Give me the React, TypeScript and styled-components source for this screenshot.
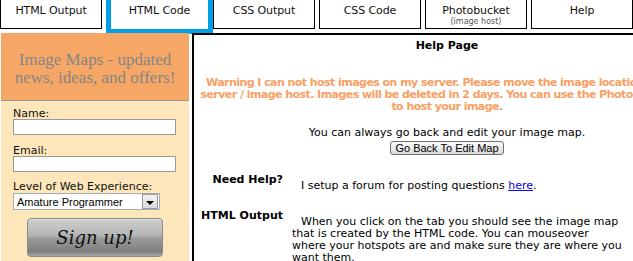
import React from 'react';
import styled, { createGlobalStyle } from 'styled-components';

const Global = createGlobalStyle`
  html, body { margin: 0; padding: 0; overflow: hidden; background: #fff; }
  body { font-family: "DejaVu Sans", Verdana, sans-serif; font-size: 11px; color: #000; }
`;

const Page = styled.div`
  width: 760px;
`;

const TabBar = styled.div`
  display: flex;
  align-items: flex-start;
  gap: 4px;
  height: 33px;
`;

const Tab = styled.div<{ $active?: boolean }>`
  box-sizing: border-box;
  flex: none;
  width: ${p => (p.$active ? 107 : 102)}px;
  height: ${p => (p.$active ? 34 : 29)}px;
  margin-right: ${p => (p.$active ? -4 : 0)}px;
  border: ${p => (p.$active ? '5px solid #00a0e3' : '1px solid #000')};
  border-top: none;
  padding-top: 4px;
  text-align: center;
  line-height: 13px;
  letter-spacing: -0.1px;
  color: #111;
  background: #fff;
  cursor: pointer;
`;

const TabNote = styled.div`
  font-size: 8px;
  line-height: 10px;
  letter-spacing: 0;
  color: #555;
`;

const Main = styled.div`
  display: flex;
  align-items: flex-start;
  gap: 3px;
  padding-left: 1px;
`;

const Side = styled.div`
  flex: none;
  width: 188px;
  background: #fde6ba;
  min-height: 240px;
`;

const Promo = styled.div`
  height: 68px;
  box-sizing: border-box;
  padding-top: 18px;
  background: #f6a766;
  border-bottom: 1px solid #999;
  font-family: "Liberation Serif", "Times New Roman", serif;
  font-size: 17px;
  line-height: 18px;
  color: #858585;
  text-align: center;
`;

const Form = styled.div`
  padding: 7px 0 0 12px;
  display: flex;
  flex-direction: column;
  align-items: flex-start;
`;

const Label = styled.div<{ $gap?: number }>`
  line-height: 11px;
  margin-top: ${p => p.$gap ?? 0}px;
  color: #111;
`;

const Field = styled.input`
  box-sizing: border-box;
  width: 163px;
  height: 16px;
  margin: 0;
  padding: 0 2px;
  border: 1px solid #999;
  background: #fff;
  outline: none;
`;

const SelectBox = styled.div`
  box-sizing: border-box;
  display: flex;
  align-items: center;
  width: 147px;
  height: 17px;
  margin-top: 1px;
  border: 1px solid #a5acb2;
  background: #fff;
  font-family: "Liberation Sans", Arial, sans-serif;
  font-size: 11px;
  padding-left: 3px;
`;

const SelectText = styled.span`
  flex: 1;
`;

const SelectArrow = styled.span`
  box-sizing: border-box;
  width: 16px;
  height: 15px;
  margin-right: 1px;
  border: 1px solid #9a9a9a;
  background: linear-gradient(#f4f4f4, #d8d8d8);
  display: flex;
  align-items: flex-end;
  justify-content: center;
  padding-bottom: 3px;
  &::after {
    content: '';
    border-left: 4px solid transparent;
    border-right: 4px solid transparent;
    border-top: 4px solid #000;
  }
`;

const SignUp = styled.button`
  box-sizing: border-box;
  width: 136px;
  height: 39px;
  margin: 8px 0 0 14px;
  border: 1px solid #8a8a8a;
  border-radius: 4px;
  background: linear-gradient(#cfcfcf 0%, #b5b5b5 45%, #9b9b9b 52%, #7e7e7e 88%, #a8a8a8 100%);
  box-shadow: inset 0 1px 0 #e2e2e2;
  font-family: "DejaVu Serif", Georgia, serif;
  font-style: italic;
  font-size: 18px;
  color: #111;
  padding: 0;
  cursor: pointer;
`;

const Content = styled.div`
  flex: none;
  width: 506px;
  border: 2px solid #000;
  border-bottom: none;
  padding-top: 4px;
  min-height: 240px;
`;

const Title = styled.div`
  text-align: center;
  font-weight: bold;
  line-height: 13px;
`;

const Warning = styled.p`
  margin: 25px 0 0;
  text-align: center;
  font-weight: bold;
  color: #f8a064;
  line-height: 12px;
  letter-spacing: -0.55px;
  white-space: nowrap;
`;

const Note = styled.div`
  margin-top: 13px;
  text-align: center;
  line-height: 13px;
`;

const ButtonRow = styled.div`
  margin-top: 2px;
  text-align: center;
`;

const SmallButton = styled.button`
  box-sizing: border-box;
  height: 14px;
  padding: 0 4px;
  border: 1px solid #707070;
  border-radius: 3px;
  background: linear-gradient(#fafafa, #dcdcdc);
  font-family: "Liberation Sans", Arial, sans-serif;
  font-size: 11px;
  line-height: 12px;
  color: #000;
  cursor: pointer;
`;

const HelpGrid = styled.div`
  display: grid;
  grid-template-columns: 89px 360px;
  column-gap: 9px;
  row-gap: 18px;
  margin-top: 19px;
`;

const Term = styled.div`
  font-weight: bold;
  text-align: right;
  line-height: 12px;
`;

const Desc = styled.div`
  padding-top: 6px;
  line-height: 12px;
  text-indent: 9px;
  white-space: nowrap;
`;

const Link = styled.a`
  color: #0000ee;
  text-decoration: underline;
`;

const tabs = [
  { label: 'HTML Output' },
  { label: 'HTML Code', active: true },
  { label: 'CSS Output' },
  { label: 'CSS Code' },
  { label: 'Photobucket', note: '(image host)' },
  { label: 'Help' },
];

export default function App() {
  return (
    <Page>
      <Global />
      <TabBar>
        {tabs.map(t => (
          <Tab key={t.label} $active={t.active}>
            {t.label}
            {t.note && <TabNote>{t.note}</TabNote>}
          </Tab>
        ))}
      </TabBar>
      <Main>
        <Side>
          <Promo>
            Image Maps - updated
            <br />
            news, ideas, and offers!
          </Promo>
          <Form>
            <Label>Name:</Label>
            <Field type="text" />
            <Label $gap={10}>Email:</Label>
            <Field type="text" />
            <Label $gap={9}>Level of Web Experience:</Label>
            <SelectBox>
              <SelectText>Amature Programmer</SelectText>
              <SelectArrow />
            </SelectBox>
            <SignUp>Sign up!</SignUp>
          </Form>
        </Side>
        <Content>
          <Title>Help Page</Title>
          <Warning>
            Warning I can not host images on my server. Please move the image location to your
            <br />
            server / image host. Images will be deleted in 2 days. You can use the Photobucket tab
            <br />
            to host your image.
          </Warning>
          <Note>You can always go back and edit your image map.</Note>
          <ButtonRow>
            <SmallButton>Go Back To Edit Map</SmallButton>
          </ButtonRow>
          <HelpGrid>
            <Term>Need Help?</Term>
            <Desc>
              I setup a forum for posting questions <Link href="#">here</Link>.
            </Desc>
            <Term>HTML Output</Term>
            <Desc>
              When you click on the tab you should see the image map
              <br />
              that is created by the HTML code. You can mouseover
              <br />
              where your hotspots are and make sure they are where you
              <br />
              want them.
            </Desc>
          </HelpGrid>
        </Content>
      </Main>
    </Page>
  );
}
